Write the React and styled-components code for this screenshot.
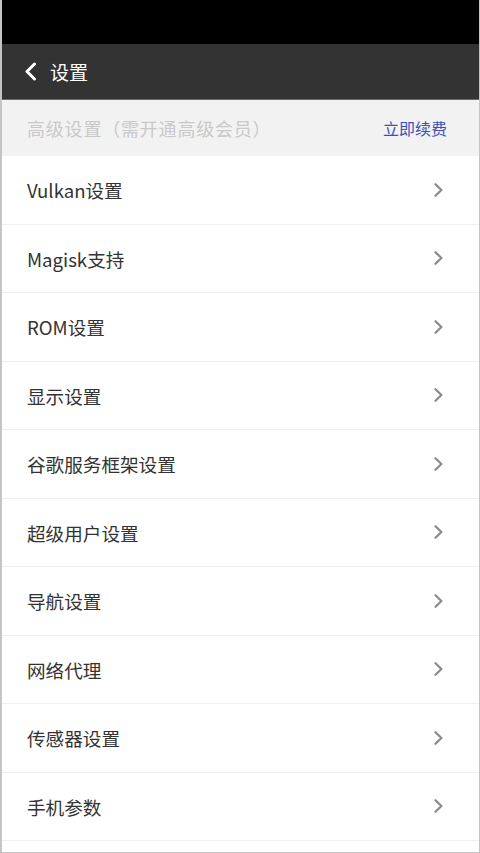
import React from "react";
import styled, { createGlobalStyle } from "styled-components";

const Global = createGlobalStyle`
  html, body { margin: 0; padding: 0; background: #fff; }
  body { font-family: "Noto Sans CJK SC", "Noto Sans", sans-serif; }
`;

const Screen = styled.div`
  width: 480px;
  height: 853px;
  box-sizing: border-box;
  border-left: 2px solid #c4c4c4;
  border-right: 1px solid #c4c4c4;
  border-bottom: 1px solid #c4c4c4;
  display: flex;
  flex-direction: column;
  overflow: hidden;
  background: #fff;
`;

const StatusBar = styled.div`
  height: 44px;
  background: #000;
  margin-left: -2px;
  margin-right: -1px;
  flex-shrink: 0;
`;

const TopBar = styled.div`
  height: 55px;
  background: #333333;
  border-bottom: 1px solid #6a6a6a;
  display: flex;
  align-items: center;
  padding-left: 22px;
  gap: 13px;
  flex-shrink: 0;
`;

const Title = styled.span`
  color: #fff;
  font-size: 19px;
  line-height: 1;
`;

const Notice = styled.div`
  height: 56px;
  background: #f2f2f2;
  display: flex;
  align-items: center;
  justify-content: space-between;
  padding: 0 32px 0 25px;
  flex-shrink: 0;
`;

const NoticeText = styled.span`
  color: #c9c9c9;
  font-size: 18px;
  letter-spacing: 0.8px;
`;

const RenewLink = styled.span`
  color: #3c4fc2;
  font-size: 16px;
`;

const List = styled.div`
  display: flex;
  flex-direction: column;
`;

const Row = styled.div`
  height: 68.5px;
  box-sizing: border-box;
  display: flex;
  align-items: center;
  justify-content: space-between;
  padding: 0 36px 0 25px;
  border-bottom: 1px solid #efefef;
  flex-shrink: 0;
`;

const Label = styled.span`
  color: #333;
  font-size: 18.6px;
`;

const Chevron = ({ color = "#8a8a8a", size = 14, stroke = 2.2, w = 9 }) => (
  <svg width={w} height={size} viewBox={`0 0 ${w} ${size}`} fill="none">
    <path
      d={`M1.5 1.2 L${w - 1.6} ${size / 2} L1.5 ${size - 1.2}`}
      stroke={color}
      strokeWidth={stroke}
      strokeLinecap="round"
      strokeLinejoin="round"
    />
  </svg>
);

const BackIcon = () => (
  <svg width="13" height="19" viewBox="0 0 13 19" fill="none">
    <path
      d="M10.5 2 L3 9.5 L10.5 17"
      stroke="#fff"
      strokeWidth="3"
      strokeLinecap="round"
      strokeLinejoin="round"
    />
  </svg>
);

const items = [
  "Vulkan设置",
  "Magisk支持",
  "ROM设置",
  "显示设置",
  "谷歌服务框架设置",
  "超级用户设置",
  "导航设置",
  "网络代理",
  "传感器设置",
  "手机参数",
];

export default function App() {
  return (
    <>
      <Global />
      <Screen>
        <StatusBar />
        <TopBar>
          <BackIcon />
          <Title>设置</Title>
        </TopBar>
        <Notice>
          <NoticeText>高级设置（需开通高级会员）</NoticeText>
          <RenewLink>立即续费</RenewLink>
        </Notice>
        <List>
          {items.map((t) => (
            <Row key={t}>
              <Label>{t}</Label>
              <Chevron />
            </Row>
          ))}
        </List>
      </Screen>
    </>
  );
}
